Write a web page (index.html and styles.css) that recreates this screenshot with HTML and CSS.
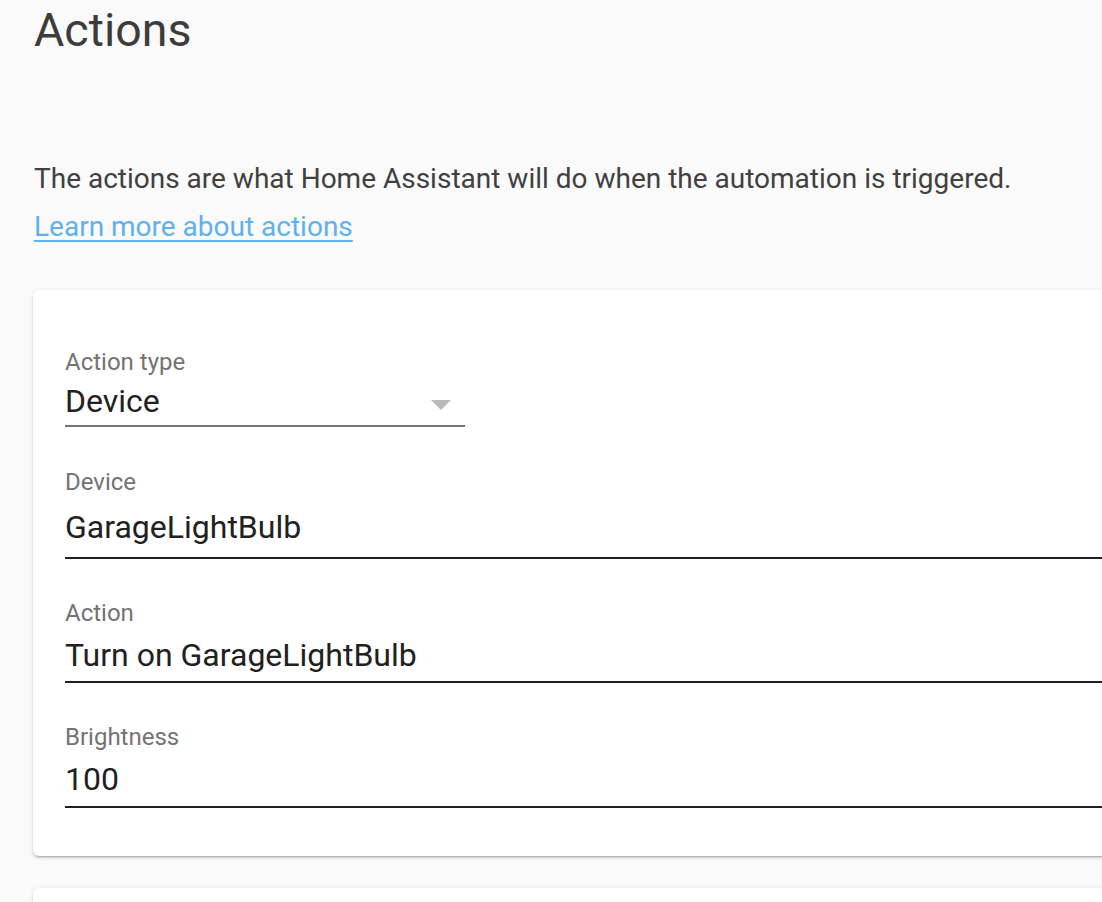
FILE: index.html
```html
<!DOCTYPE html>
<html lang="en">
<head>
<meta charset="utf-8">
<title>Actions</title>
<link rel="stylesheet" href="styles.css">
</head>
<body>
<div class="page">
  <h1 class="title">Actions</h1>
  <p class="desc">The actions are what Home Assistant will do when the automation is triggered.</p>
  <a class="learn" href="#">Learn more about actions</a>
  <div class="card">
    <div class="field field-type">
      <div class="label">Action type</div>
      <div class="input short">
        <span class="value">Device</span>
        <span class="caret"></span>
      </div>
    </div>
    <div class="field field-device">
      <div class="label">Device</div>
      <div class="input dark"><span class="value">GarageLightBulb</span></div>
    </div>
    <div class="field field-action">
      <div class="label">Action</div>
      <div class="input dark"><span class="value">Turn on GarageLightBulb</span></div>
    </div>
    <div class="field field-bright">
      <div class="label">Brightness</div>
      <div class="input dark"><span class="value">100</span></div>
    </div>
  </div>
  <div class="card card-next"></div>
</div>
</body>
</html>
```
FILE: styles.css
```css
html, body {
  margin: 0;
  padding: 0;
  background: #fafafa;
  overflow: hidden;
}
body {
  font-family: Roboto, "Liberation Sans", sans-serif;
  width: 1102px;
  height: 902px;
}
.page {
  padding: 2px 0 0 34px;
  width: 1130px;
}
.title {
  margin: 0;
  font-size: 46.5px;
  font-weight: 400;
  line-height: 56px;
  color: #3c3c3c;
}
.desc {
  margin: 103px 0 0 0;
  font-size: 28px;
  line-height: 36px;
  color: #404040;
}
.learn {
  display: block;
  width: fit-content;
  margin-top: 12px;
  font-size: 28px;
  line-height: 36px;
  color: #5eb1ee;
  text-decoration: underline;
  text-underline-offset: 4px;
  text-decoration-thickness: 2px;
}
.card {
  margin: 45px 0 0 -1px;
  background: #fff;
  border-radius: 6px;
  box-shadow: 0 2px 2px rgba(0,0,0,0.14), 0 1px 5px rgba(0,0,0,0.10), 0 3px 1px -2px rgba(0,0,0,0.12);
  padding: 58px 32px 48px 32px;
  display: flex;
  flex-direction: column;
}
.card-next {
  margin-top: 32px;
  height: 40px;
  padding: 0;
}
.label {
  font-size: 24px;
  line-height: 28px;
  color: #737373;
}
.input {
  display: flex;
  align-items: center;
  margin-top: 8px;
  padding-bottom: 6px;
  border-bottom: 2px solid #212121;
}
.value {
  flex: 1;
  font-size: 32px;
  line-height: 40px;
  color: #212121;
}
.field-type .input {
  width: 400px;
  margin-top: 5px;
  padding-bottom: 4px;
  border-bottom-color: #757575;
}
.field-device { margin-top: 41px; }
.field-device .input { margin-top: 11px; padding-bottom: 10px; }
.field-action { margin-top: 40px; }
.field-bright { margin-top: 40px; }
.field-bright .input { padding-bottom: 7px; }
.caret {
  width: 0;
  height: 0;
  border-left: 10px solid transparent;
  border-right: 10px solid transparent;
  border-top: 10px solid #bababa;
  margin-right: 14px;
  margin-top: 7px;
}
```
